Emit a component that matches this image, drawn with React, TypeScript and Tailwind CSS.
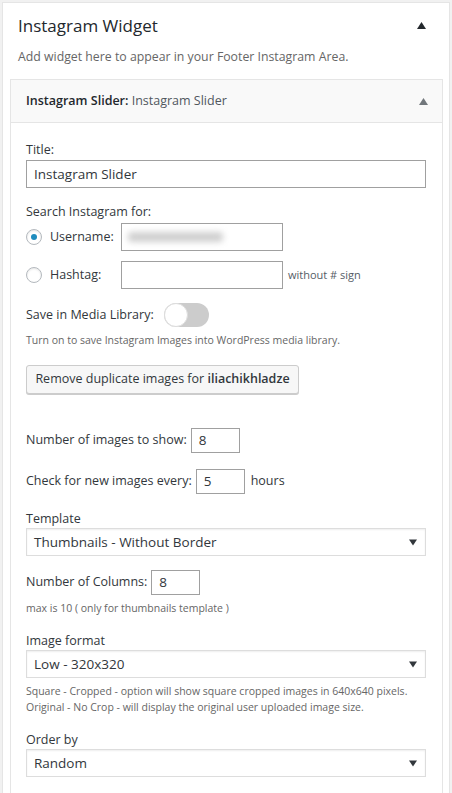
import React from "react";

const font = { fontFamily: '"Open Sans", "Noto Sans", sans-serif' };

function Select({ value }: { value: string }) {
  return (
    <div className="flex h-[28px] w-[400px] items-center justify-between border border-[#dddddd] bg-white pl-[7px] pr-[8px] shadow-[inset_0_1px_2px_rgba(0,0,0,0.07)]">
      <span className="text-[13.5px] text-[#32373c]">{value}</span>
      <svg width="8" height="8" viewBox="0 0 8 8">
        <path d="M0 1.5 L8 1.5 L4 7.5 Z" fill="#32373c" />
      </svg>
    </div>
  );
}

function SmallInput({ value, w = 49 }: { value: string; w?: number }) {
  return (
    <div
      className="flex h-[25px] items-center border border-[#a0a0a0] bg-white pl-[7px] text-[13.5px] text-[#32373c]"
      style={{ width: w }}
    >
      {value}
    </div>
  );
}

export default function App() {
  return (
    <div className="h-[793px] w-[452px] overflow-hidden bg-[#f1f1f1] pl-[2px] pt-[2px]" style={font}>
      <div className="h-[800px] w-[448px] border border-[#e5e5e5] bg-white">
        <div className="flex h-[34px] items-center justify-between pl-[15px] pr-[23px] pt-[11px]">
          <h2 className="text-[17px] font-medium text-[#23282d]">Instagram Widget</h2>
          <svg width="9" height="7" viewBox="0 0 9 7">
            <path d="M0 7 L4.5 0 L9 7 Z" fill="#23282d" />
          </svg>
        </div>
        <p className="pl-[15px] pt-[12px] text-[12.3px] leading-[16px] text-[#666666]">Add widget here to appear in your Footer Instagram Area.</p>
        <div className="ml-[7px] mt-[14px] w-[433px] border border-[#e5e5e5]">
          <div className="flex h-[43px] items-center justify-between border-b border-[#e5e5e5] bg-[#f9f9f9] pl-[15px] pr-[14px]">
            <span className="text-[12.5px] text-[#23282d]">
              <span className="font-semibold">Instagram Slider:</span>
              <span className="text-[#50575e]"> Instagram Slider</span>
            </span>
            <svg width="9" height="7" viewBox="0 0 9 7">
              <path d="M0 7 L4.5 0 L9 7 Z" fill="#72777c" />
            </svg>
          </div>
          <div className="px-[15px] pt-[18px] pb-[30px] text-[12.5px] text-[#32373c]">
            <div className="leading-[18px]">Title:</div>
            <div className="mt-[1px] flex h-[28px] w-[400px] items-center border border-[#a0a0a0] pl-[7px] text-[13.5px] text-[#32373c]">
              Instagram Slider
            </div>
            <div className="mt-[15px] leading-[18px]">Search Instagram for:</div>
            <div className="mt-[2px] flex h-[28px] items-center">
              <div className="flex h-[16px] w-[16px] items-center justify-center rounded-full border border-[#b4b9be] shadow-[inset_0_1px_2px_rgba(0,0,0,0.1)]">
                <div className="h-[6px] w-[6px] rounded-full bg-[#1e8cbe]" />
              </div>
              <span className="ml-[8px] w-[71px]">Username:</span>
              <div className="flex h-[28px] w-[162px] items-center border border-[#a0a0a0] pl-[6px]">
                <div className="h-[10px] w-[95px] rounded-sm bg-[#cfcfcf] blur-[3px]" />
              </div>
            </div>
            <div className="mt-[10px] flex h-[28px] items-center">
              <div className="h-[16px] w-[16px] rounded-full border border-[#b4b9be] shadow-[inset_0_1px_2px_rgba(0,0,0,0.1)]" />
              <span className="ml-[8px] w-[71px]">Hashtag:</span>
              <div className="h-[28px] w-[162px] border border-[#a0a0a0]" />
              <span className="ml-[5px] text-[11px] text-[#555d66]">without # sign</span>
            </div>
            <div className="mt-[14px] flex items-center">
              <span>Save in Media Library:</span>
              <div className="ml-[10px] flex h-[24px] w-[45px] items-center rounded-full bg-[#cccccc]">
                <div className="h-[24px] w-[24px] rounded-full border border-[#dddddd] bg-white" />
              </div>
            </div>
            <p className="mt-[6px] text-[10.5px] text-[#666666]">Turn on to save Instagram Images into WordPress media library.</p>
            <div className="mt-[16px] flex h-[29px] w-[273px] items-center justify-center rounded-[3px] border border-[#cccccc] bg-[#f7f7f7] text-[12.5px] text-[#32373c] shadow-[0_1px_0_#cccccc]">
              Remove duplicate images for&nbsp;<span className="font-semibold">iliachikhladze</span>
            </div>
            <div className="mt-[34px] flex items-center">
              <span className="mr-[4px]">Number of images to show:</span>
              <SmallInput value="8" />
            </div>
            <div className="mt-[16px] flex items-center">
              <span className="mr-[4px]">Check for new images every:</span>
              <SmallInput value="5" />
              <span className="ml-[6px]">hours</span>
            </div>
            <div className="mt-[16px] leading-[18px]">Template</div>
            <Select value="Thumbnails - Without Border" />
            <div className="mt-[14px] flex items-center">
              <span className="mr-[4px]">Number of Columns:</span>
              <SmallInput value="8" />
            </div>
            <p className="mt-[6px] text-[10.5px] leading-[14px] text-[#666666]">max is 10 ( only for thumbnails template )</p>
            <div className="mt-[17px] leading-[18px]">Image format</div>
            <Select value="Low - 320x320" />
            <p className="mt-[5px] text-[10.5px] leading-[16px] text-[#666666]">
              Square - Cropped - option will show square cropped images in 640x640 pixels.
              <br />
              Original - No Crop - will display the original user uploaded image size.
            </p>
            <div className="mt-[16px] leading-[18px]">Order by</div>
            <Select value="Random" />
          </div>
        </div>
      </div>
    </div>
  );
}
